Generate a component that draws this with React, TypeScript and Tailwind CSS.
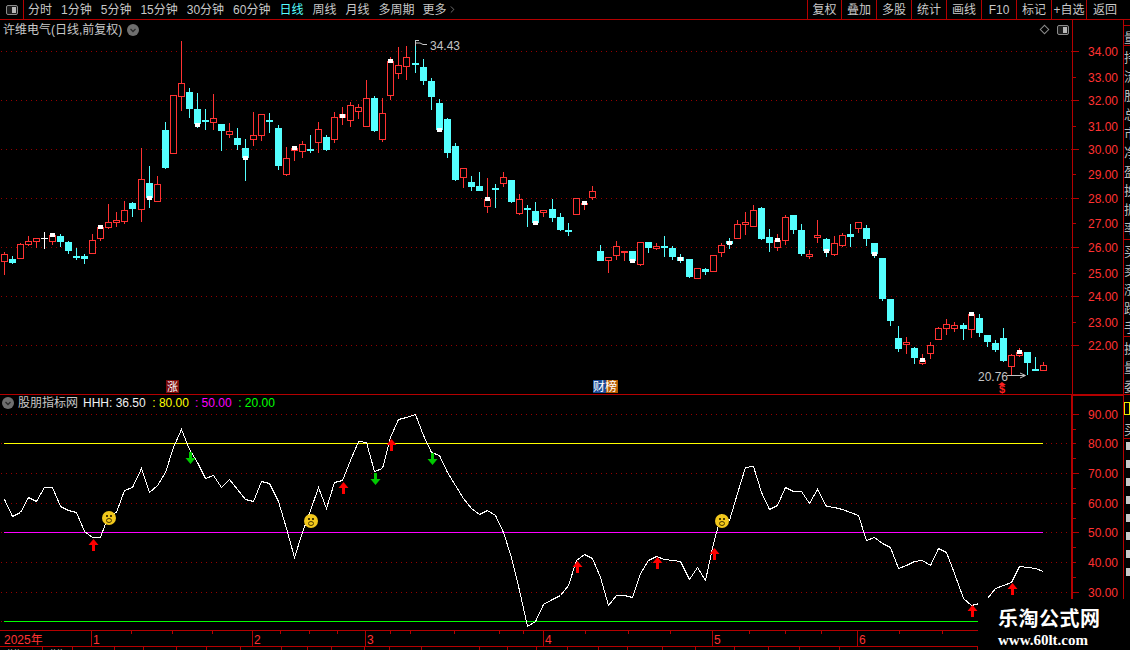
import { ChevronRight } from 'lucide-react'

type Candle = [string, number, number, number, number, number?]

// kind, high, body top, body bottom, low, white mark y
const candles: Candle[] = [
    ['r', 252, 254, 262, 275], ['c', 256, 259, 263, 264], ['r', 243, 244, 259, 259], ['r', 236, 241, 245, 246],
    ['r', 238, 238, 242, 248], ['w', 232, 238, 239, 249], ['r', 235, 235, 242, 245, 233], ['c', 234, 236, 242, 247],
    ['c', 241, 242, 251, 254], ['c', 248, 256, 258, 260], ['c', 254, 256, 259, 264], ['r', 234, 240, 254, 254],
    ['r', 227, 227, 239, 241, 225], ['r', 204, 222, 228, 229], ['r', 212, 220, 223, 227], ['r', 201, 210, 222, 224],
    ['c', 202, 203, 209, 217], ['r', 148, 179, 210, 222], ['c', 166, 183, 198, 208, 196], ['r', 176, 184, 202, 202],
    ['c', 122, 130, 168, 169], ['r', 95, 95, 154, 154], ['r', 41, 83, 97, 111], ['c', 88, 92, 109, 118],
    ['c', 93, 109, 124, 128, 123], ['c', 109, 120, 122, 130], ['r', 94, 118, 123, 130], ['c', 124, 124, 131, 151],
    ['r', 123, 131, 135, 138], ['c', 128, 138, 145, 150], ['c', 139, 148, 158, 181, 156], ['r', 112, 135, 140, 146],
    ['r', 114, 114, 136, 141], ['c', 113, 120, 122, 133], ['c', 125, 128, 166, 170], ['r', 147, 158, 175, 176],
    ['r', 148, 148, 151, 161, 146], ['r', 141, 144, 152, 158], ['c', 135, 149, 151, 153], ['r', 122, 129, 143, 153],
    ['c', 135, 137, 150, 151], ['r', 112, 117, 140, 143], ['r', 107, 114, 118, 125, 114], ['r', 102, 105, 121, 127],
    ['r', 104, 107, 112, 119], ['r', 80, 98, 127, 127], ['c', 96, 98, 131, 132], ['r', 98, 113, 140, 142],
    ['r', 57, 61, 96, 100, 59], ['r', 47, 65, 74, 79], ['r', 46, 57, 67, 80], ['c', 40, 63, 65, 73],
    ['c', 59, 67, 81, 85], ['c', 78, 81, 97, 110], ['c', 99, 103, 130, 130, 128], ['c', 118, 119, 153, 158],
    ['c', 143, 146, 180, 181], ['r', 168, 168, 178, 188], ['c', 176, 182, 187, 191], ['c', 172, 186, 191, 191],
    ['r', 178, 199, 207, 213, 197], ['c', 184, 188, 190, 208], ['r', 172, 177, 184, 187], ['c', 180, 180, 202, 203],
    ['r', 194, 199, 214, 215], ['c', 205, 208, 210, 227], ['c', 202, 211, 223, 223, 221], ['r', 210, 210, 213, 217],
    ['c', 199, 209, 218, 222], ['c', 213, 217, 230, 231], ['c', 223, 230, 232, 236], ['r', 198, 198, 215, 215],
    ['r', 201, 203, 205, 210, 201], ['r', 186, 191, 198, 200], ['c', 245, 251, 261, 261], ['r', 257, 257, 261, 273],
    ['r', 241, 246, 256, 260], ['r', 251, 251, 253, 261], ['c', 251, 251, 261, 263, 259], ['r', 242, 242, 265, 266],
    ['c', 242, 242, 248, 253], ['r', 243, 246, 249, 250], ['c', 236, 246, 248, 257], ['c', 246, 248, 257, 260],
    ['c', 254, 257, 261, 263, 257], ['c', 259, 259, 277, 278], ['r', 268, 268, 279, 279], ['c', 268, 269, 272, 275],
    ['r', 255, 255, 272, 272], ['r', 243, 245, 253, 257], ['c', 238, 241, 244, 249, 241], ['r', 220, 224, 239, 239],
    ['r', 212, 222, 225, 235], ['r', 205, 210, 227, 227], ['c', 207, 208, 239, 240], ['c', 229, 237, 243, 252],
    ['r', 234, 240, 248, 251, 238], ['r', 215, 217, 241, 245], ['c', 215, 215, 230, 234], ['c', 224, 230, 254, 256],
    ['r', 250, 254, 257, 259], ['r', 220, 235, 238, 243], ['c', 238, 239, 251, 257, 249], ['r', 236, 243, 255, 256],
    ['r', 233, 235, 246, 247], ['c', 224, 234, 237, 247], ['r', 222, 222, 229, 233], ['c', 225, 228, 239, 246],
    ['c', 243, 243, 254, 258, 252], ['c', 258, 258, 299, 301], ['c', 299, 299, 321, 326], ['c', 326, 338, 349, 352],
    ['r', 337, 342, 345, 354], ['c', 347, 348, 358, 364], ['r', 354, 360, 364, 365, 358], ['r', 342, 345, 354, 359],
    ['r', 327, 328, 340, 340], ['r', 319, 324, 329, 335], ['r', 322, 325, 329, 332], ['c', 323, 325, 329, 340],
    ['r', 314, 314, 330, 338, 312], ['c', 314, 318, 333, 337], ['c', 335, 335, 342, 347], ['c', 340, 343, 350, 352],
    ['c', 328, 338, 361, 362], ['r', 354, 355, 367, 375], ['r', 348, 352, 356, 357, 350], ['c', 352, 352, 363, 375],
    ['c', 357, 369, 371, 371], ['r', 362, 365, 371, 371],
]

const rsi = [
    499, 516, 512, 497, 501, 487, 487, 506, 510, 512, 531, 537, 537, 515, 512, 490, 487, 468, 492, 485,
    472, 447, 429, 449, 462, 478, 475, 487, 479, 489, 499, 501, 481, 483, 501, 528, 557, 532, 510, 487,
    508, 482, 480, 460, 441, 442, 471, 468, 437, 419, 417, 414, 435, 452, 455, 472, 485, 498, 508, 514,
    510, 515, 532, 557, 590, 626, 621, 604, 599, 595, 585, 560, 554, 558, 577, 605, 595, 595, 597, 573,
    560, 556, 559, 560, 561, 579, 567, 580, 543, 514, 520, 493, 467, 466, 492, 509, 505, 487, 491, 491,
    503, 489, 506, 507, 509, 512, 515, 540, 537, 543, 547, 568, 565, 561, 560, 565, 548, 552, 573, 598,
    605, 603, 598, 588, 585, 582, 566, 567, 568, 571,
]

const px = (i: number) => 4 + 8 * i + Math.floor(i / 17)

const leftTabs = ['分时', '1分钟', '5分钟', '15分钟', '30分钟', '60分钟', '日线', '周线', '月线', '多周期']
const rightTabs = [
    { label: '复权', w: 'w-[34px]' },
    { label: '叠加', w: 'w-[35px]' },
    { label: '多股', w: 'w-[35px]' },
    { label: '统计', w: 'w-[35px]' },
    { label: '画线', w: 'w-[35px]' },
    { label: 'F10', w: 'w-[35px]' },
    { label: '标记', w: 'w-[35px]' },
    { label: '+自选', w: 'w-[35px]' },
    { label: '返回', w: 'w-[37px]' },
]

const priceGrid = [51, 100, 149, 198, 247, 296, 345]
const priceLabels: [string, number][] = [
    ['34.00', 51], ['33.00', 77], ['32.00', 100], ['31.00', 126], ['30.00', 149], ['29.00', 174], ['28.00', 198],
    ['27.00', 223], ['26.00', 247], ['25.00', 273], ['24.00', 296], ['23.00', 322], ['22.00', 345],
]
const rsiLabels: [string, number][] = [
    ['90.00', 414], ['80.00', 443], ['70.00', 473], ['60.00', 503], ['50.00', 532], ['40.00', 562], ['30.00', 592],
]
const rsiGrid = [414, 473, 503, 562, 592]
const redArrows: [number, number][] = [[93, 539], [343, 482], [391, 439], [577, 561], [657, 557], [714, 548], [972, 605], [1012, 583]]
const greenArrows: [number, number][] = [[190, 452], [375, 473], [432, 453]]
const smileys: [number, number][] = [[109, 518], [311, 521], [722, 521]]
const months: [string, number][] = [['1', 91], ['2', 252], ['3', 365], ['4', 543], ['5', 712], ['6', 857]]
const timeTicks = [131, 172, 212, 280, 309, 337, 390, 410, 454, 499, 523, 585, 628, 670, 749, 785, 821, 899, 942]
const bottomCells = [43, 30, 42, 29, 33, 30, 34, 41, 26, 24, 33, 25, 32, 58, 28, 29, 31, 31, 29, 35, 33, 39, 34, 31, 40, 138]

function PanelToggle() {
    return (
        <svg width="12" height="10" viewBox="0 0 12 10">
            <rect x="0.5" y="0.5" width="11" height="9" rx="1.5" fill="#1c1c1c" stroke="#8c8c8c" />
            <rect x="6" y="2" width="4" height="6" fill="#b8b8b8" />
        </svg>
    )
}

function RoundChevron() {
    return (
        <svg width="12" height="12" viewBox="0 0 12 12" className="shrink-0">
            <circle cx="6" cy="6" r="6" fill="#6f6f6f" />
            <path d="M3.5 5 L6 7.5 L8.5 5" fill="none" stroke="#2a2a2a" strokeWidth="1.3" />
        </svg>
    )
}

function Axis({ labels, box, step }: { labels: [string, number][]; box: string; step?: boolean }) {
    return (
        <svg width="50" height="100%" viewBox={box} className="block">
            {labels.map(([text, y], i) => (
                <g key={text}>
                    <rect x="1073" y={y} width={i % 2 === 0 ? 6 : 3} height="1" fill="#b40000" shapeRendering="crispEdges" />
                    {step && <rect x="1073" y={y + 15} width="3" height="1" fill="#b40000" shapeRendering="crispEdges" />}
                    <text x="1088" y={y + 5} fontSize="12" fill="#ff3232">{text}</text>
                </g>
            ))}
        </svg>
    )
}

function KLine() {
    return (
        <svg width="1072" height="355" viewBox="0 39 1072 355" className="block">
            {priceGrid.map((y) => (
                <line key={y} x1="1" x2="1072" y1={y + 0.5} y2={y + 0.5} stroke="#960000" strokeDasharray="1 4" />
            ))}
            <g shapeRendering="crispEdges">
                {candles.map(([kind, high, top, bottom, low, mark], i) => {
                    const x = px(i)
                    const color = kind === 'r' ? '#ff3232' : kind === 'c' ? '#54ffff' : '#ffffff'
                    return (
                        <g key={i}>
                            <rect x={x} y={high} width="1" height={Math.max(top - high, 0)} fill={color} />
                            <rect x={x} y={bottom} width="1" height={Math.max(low - bottom, 0)} fill={color} />
                            {kind === 'r' ? (
                                <rect x={x - 2.5} y={top + 0.5} width="6" height={bottom - top - 1} fill="#000" stroke={color} />
                            ) : (
                                <rect x={x - 3} y={top} width="7" height={bottom - top} fill={color} />
                            )}
                            {mark !== undefined && <rect x={x - 2} y={mark} width="5" height="4" fill="#fff" />}
                        </g>
                    )
                })}
            </g>
            <path d="M415.5 46 V40.5 H419 M416 43 H420 L423 44.5 L427 44.5" fill="none" stroke="#c8c8c8" />
            <text x="430" y="50" fontSize="12" fill="#c4c4c4">34.43</text>
            <text x="978" y="381" fontSize="12" fill="#c4c4c4">20.76</text>
            <path d="M1007 375.5 H1025 M1020 373 L1025.5 375.5 L1020 378" fill="none" stroke="#c4c4c4" />
            <path d="M1002 382 L1006 385 H998 Z" fill="#ff2020" />
            <text x="1002" y="393" fontSize="11" fontWeight="700" textAnchor="middle" fill="#ff2020">$</text>
            <rect x="166" y="380" width="13" height="13" fill="#7a0a0a" />
            <text x="172.5" y="391" fontSize="11" textAnchor="middle" fill="#ffffff">涨</text>
            <rect x="593" y="380" width="13" height="13" fill="#1a4a96" />
            <rect x="606" y="380" width="12" height="13" fill="#b85c00" />
            <text x="593" y="391" fontSize="12" fill="#ffffff">财榜</text>
        </svg>
    )
}

function Oscillator() {
    return (
        <svg width="1071" height="219" viewBox="0 411 1071 219" className="block">
            {rsiGrid.concat([443, 532, 621]).map((y) => (
                <line key={y} x1="1" x2="1071" y1={y + 0.5} y2={y + 0.5} stroke="#960000" strokeDasharray="1 4" />
            ))}
            <g shapeRendering="crispEdges">
                <rect x="4" y="443" width="1039" height="1" fill="#ffff00" />
                <rect x="4" y="532" width="1039" height="1" fill="#ff00ff" />
                <rect x="4" y="621" width="1039" height="1" fill="#00ff00" />
                <polyline
                    points={rsi.map((y, i) => `${px(i) + 0.5},${y + 0.5}`).join(' ')}
                    fill="none"
                    stroke="#ffffff"
                />
            </g>
            {redArrows.map(([x, y]) => (
                <path key={x} d={`M${x + 0.5} ${y} L${x + 5.5} ${y + 6} H${x + 2} V${y + 12} H${x - 1} V${y + 6} H${x - 4.5} Z`} fill="#ff0000" />
            ))}
            {greenArrows.map(([x, y]) => (
                <path key={x} d={`M${x - 1} ${y} H${x + 2} V${y + 6} H${x + 5.5} L${x + 0.5} ${y + 12} L${x - 4.5} ${y + 6} H${x - 1} Z`} fill="#00c800" />
            ))}
            {smileys.map(([x, y]) => (
                <g key={x}>
                    <circle cx={x} cy={y} r="7" fill="#f2c81c" />
                    <rect x={x - 3} y={y - 3} width="2" height="2" fill="#4a3a00" />
                    <rect x={x + 1} y={y - 3} width="2" height="2" fill="#4a3a00" />
                    <ellipse cx={x} cy={y + 2.5} rx="2.5" ry="2" fill="#f2c81c" stroke="#4a3a00" />
                </g>
            ))}
        </svg>
    )
}

function TimeAxis() {
    return (
        <svg width="1123" height="15" viewBox="0 631 1123 15" className="block">
            <text x="4" y="644" fontSize="12" fill="#ff3232">2025年</text>
            {months.map(([text, x]) => (
                <g key={text}>
                    <rect x={x} y="631" width="1" height="15" fill="#b40000" shapeRendering="crispEdges" />
                    <text x={x + 2} y="644" fontSize="12" fill="#ff3232">{text}</text>
                </g>
            ))}
            {timeTicks.map((x) => (
                <rect key={x} x={x} y="631" width="1" height="3" fill="#b40000" shapeRendering="crispEdges" />
            ))}
        </svg>
    )
}

function SideText({ chars, className }: { chars: string; className?: string }) {
    return (
        <div className={`overflow-hidden whitespace-nowrap border-b border-[#b40000] pt-[2px] text-[13px] leading-[19px] text-[#bcbcbc] ${className}`}>
            {chars.split('').map((c, i) => (
                <div key={i}>{c}</div>
            ))}
        </div>
    )
}

export default function App() {
    return (
        <div className="relative flex h-[650px] w-[1130px] flex-col overflow-hidden bg-black text-[12px] leading-none text-[#c8c8c8] [font-family:'Liberation_Sans','Noto_Sans_CJK_SC',sans-serif]">
            {/* Toolbar */}
            <div className="flex h-[20px] shrink-0 items-center border-b border-[#b40000]">
                <div className="flex h-full w-[24px] items-center justify-center border-r border-[#b40000]">
                    <PanelToggle />
                </div>
                <div className="ml-[4px] flex items-center gap-[9px]">
                    {leftTabs.map((tab) => (
                        <span key={tab} className={tab === '日线' ? 'text-[#55ffff]' : ''}>{tab}</span>
                    ))}
                    <span className="-ml-[1px] flex items-center">
                        更多
                        <ChevronRight className="h-[11px] w-[11px]" strokeWidth={1.2} />
                    </span>
                </div>
                <div className="ml-auto mr-[7px] flex h-full">
                    {rightTabs.map((tab) => (
                        <div key={tab.label} className={`flex h-full items-center justify-center whitespace-nowrap border-l border-[#b40000] ${tab.w}`}>
                            {tab.label}
                        </div>
                    ))}
                </div>
            </div>

            <div className="flex min-h-0 flex-1">
                <div className="flex w-[1124px] shrink-0 flex-col border-r border-[#b40000]">
                    {/* K line panel */}
                    <div className="flex h-[375px] shrink-0 border-b border-[#b40000]">
                        <div className="flex w-[1072px] flex-col">
                            <div className="flex h-[19px] shrink-0 items-center pl-[3px] pr-[3px]">
                                <span>许维电气(日线,前复权)</span>
                                <span className="ml-[5px]"><RoundChevron /></span>
                                <span className="ml-auto h-[7px] w-[7px] rotate-45 border border-[#8c8c8c]" />
                                <span className="ml-[9px] flex"><PanelToggle /></span>
                            </div>
                            <KLine />
                        </div>
                        <div className="w-[51px] border-l border-[#b40000]">
                            <Axis labels={priceLabels} box="1073 20 50 374" />
                        </div>
                    </div>

                    {/* Indicator panel */}
                    <div className="flex h-[235px] shrink-0">
                        <div className="flex w-[1071px] flex-col">
                            <div className="flex h-[16px] shrink-0 items-center pl-[2px]">
                                <RoundChevron />
                                <span className="ml-[4px]">股朋指标网</span>
                                <span className="ml-[5px] text-[#f0f0f0]">HHH: 36.50</span>
                                <span className="ml-[6.5px] text-[#ffff00]">: 80.00</span>
                                <span className="ml-[6px] text-[#ff00ff]">: 50.00</span>
                                <span className="ml-[6.5px] text-[#00ff00]">: 20.00</span>
                            </div>
                            <Oscillator />
                        </div>
                        <div className="w-[52px] border-l-2 border-t border-[#b40000]">
                            <Axis labels={rsiLabels} box="1073 396 50 234" step />
                        </div>
                    </div>

                    {/* Time axis */}
                    <div className="h-[17px] shrink-0 border-y border-[#b40000]">
                        <TimeAxis />
                    </div>
                    <div className="flex h-[3px] shrink-0 overflow-hidden">
                        {bottomCells.map((w, i) => (
                            <div key={i} className="overflow-hidden whitespace-nowrap border-r border-[#b40000] pl-[6px] pt-[1px] text-[#d0d0d0]" style={{ width: w }}>
                                {i < 2 ? '##' : ''}
                            </div>
                        ))}
                    </div>
                </div>

                {/* Clipped side list */}
                <div className="flex w-[6px] flex-col overflow-hidden">
                    <div className="h-[6px] shrink-0 border-b border-[#b40000]" />
                    <SideText chars="量" className="h-[20px] shrink-0" />
                    <SideText chars="持流股总市净盈换振率" className="h-[194px] shrink-0" />
                    <SideText chars="买卖涨跌手" className="h-[97px] shrink-0" />
                    <SideText chars="换量委" className="h-[58px] shrink-0" />
                    <div className="mt-[7px] h-[13px] shrink-0 border border-[#e8e800]" />
                    <SideText chars="买" className="mt-[3px] h-[21px] shrink-0" />
                    <div className="mt-[3px] flex flex-col gap-[10px]">
                        {[0, 1, 2, 3, 4, 5, 6, 7].map((n) => (
                            <div key={n} className="ml-[2px] h-[8px] bg-[#c8c8c8]" />
                        ))}
                    </div>
                </div>
            </div>

            {/* Watermark */}
            <div className="absolute bottom-0 right-0 flex h-[51px] w-[152px] flex-col items-start bg-black pl-[20px] pt-[9px]">
                <span className="text-[20px] font-bold leading-[22px] tracking-[0.5px] text-white">乐淘公式网</span>
                <span className="mt-[3px] text-[15px] font-bold leading-[14px] text-white [font-family:'Liberation_Serif',serif]">www.60lt.com</span>
            </div>
        </div>
    )
}
